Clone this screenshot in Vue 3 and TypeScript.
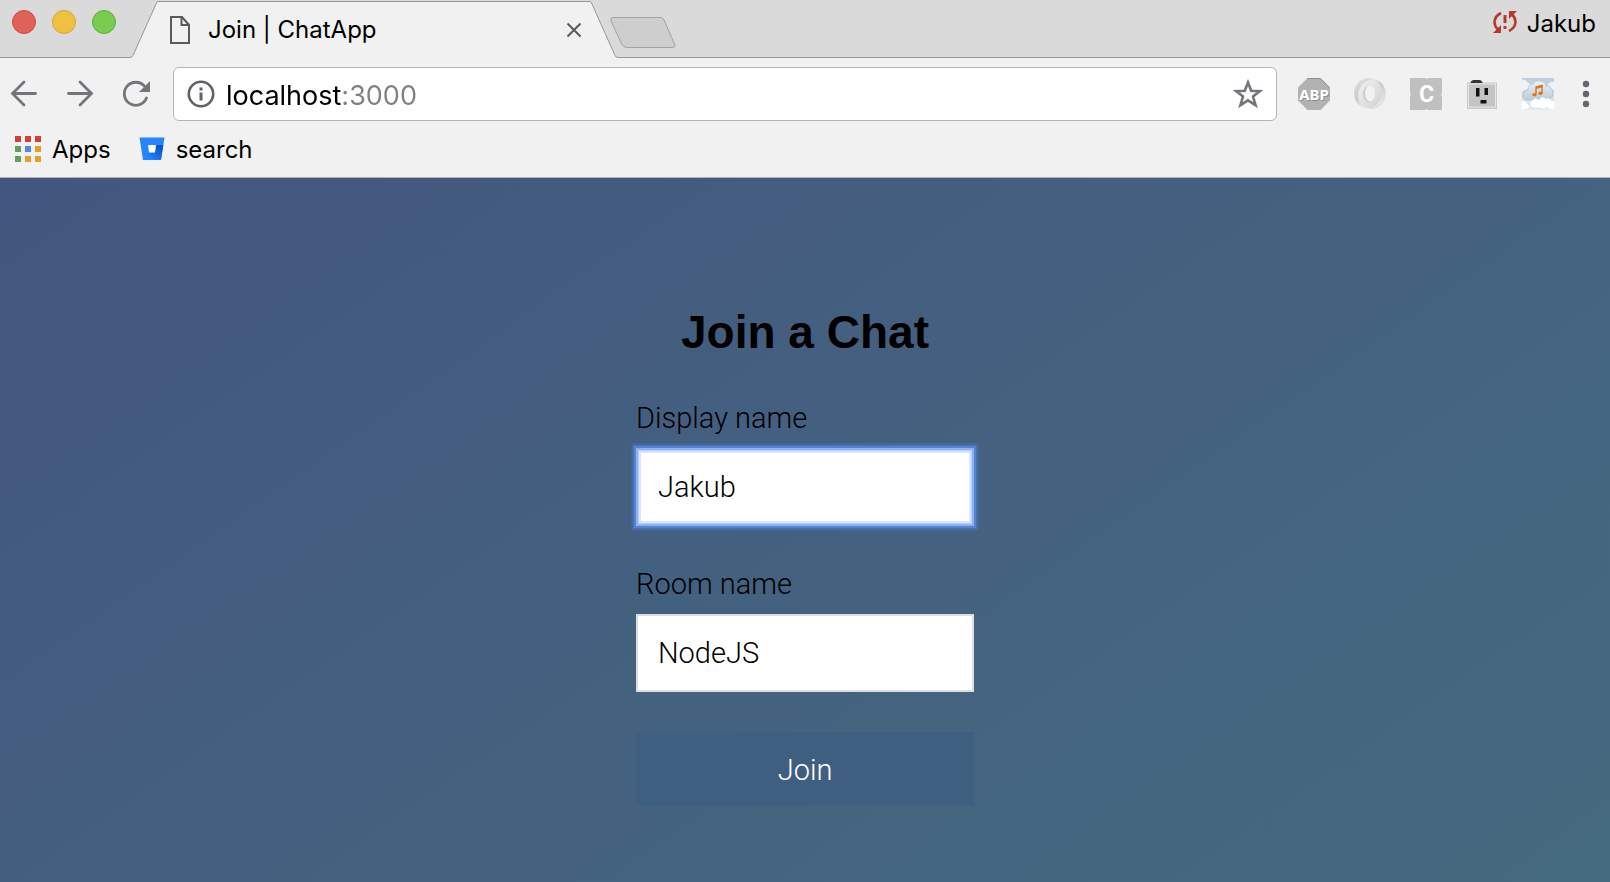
<script setup lang="ts">
import { ref } from 'vue'

const address = ref('localhost:3000')
const displayName = ref('Jakub')
const roomName = ref('NodeJS')

const appDots = [
  { x: 0, y: 0, color: '#d73c35' },
  { x: 10, y: 0, color: '#d73c35' },
  { x: 20, y: 0, color: '#d73c35' },
  { x: 0, y: 10, color: '#619f5d' },
  { x: 10, y: 10, color: '#4f87ee' },
  { x: 20, y: 10, color: '#dfa226' },
  { x: 0, y: 20, color: '#619f5d' },
  { x: 10, y: 20, color: '#dfa226' },
  { x: 20, y: 20, color: '#dfa226' },
]
</script>

<template>
  <div class="window">
    <header class="tab-strip">
      <div class="lights">
        <button class="light close" type="button" aria-label="Close window"></button>
        <button class="light minimise" type="button" aria-label="Minimise window"></button>
        <button class="light maximise" type="button" aria-label="Zoom window"></button>
      </div>
      <div class="tab">
        <svg class="slope" viewBox="0 0 28 58" aria-hidden="true">
          <path d="M0 58 V57.5 Q2 57.5 3 55.5 L26 4 Q27 1.5 28 1.5 V58 Z" fill="#f1f1f1" />
          <path d="M0 57.5 Q2 57.5 3 55.5 L26 4 Q27 1.5 28 1.5" fill="none" stroke="#989898" />
        </svg>
        <div class="tab-body">
          <svg class="page-icon" viewBox="0 0 20 28" aria-hidden="true">
            <path d="M1 1 H12 L19 9 V27 H1 Z M11.5 1 V9 H19" fill="none" stroke="#5a5a5a" stroke-width="2" />
          </svg>
          <span class="tab-title">Join | ChatApp</span>
          <button class="icon-button tab-close" type="button" aria-label="Close tab">
            <svg viewBox="0 0 16 16"><path d="M1.5 1.5 14.5 14.5 M14.5 1.5 1.5 14.5" stroke="#5a5a5a" stroke-width="2" /></svg>
          </button>
        </div>
        <svg class="slope" viewBox="0 0 28 58" aria-hidden="true">
          <path d="M28 58 V57.5 Q26 57.5 25 55.5 L2 4 Q1 1.5 0 1.5 V58 Z" fill="#f1f1f1" />
          <path d="M28 57.5 Q26 57.5 25 55.5 L2 4 Q1 1.5 0 1.5" fill="none" stroke="#989898" />
        </svg>
      </div>
      <button class="icon-button new-tab" type="button" aria-label="New tab">
        <svg viewBox="0 0 66 32">
          <path d="M3 .5 H50 Q53 .5 54 3 L64.500 27 Q66 30.500 62 30.500 H17 Q13.500 30.500 12 27.500 L1 4 Q0 .5 3 .5 Z" fill="#cecece" stroke="#a2a2a2" />
        </svg>
      </button>
      <button class="profile" type="button">
        <svg class="sync" viewBox="0 0 24 22" aria-hidden="true">
          <path d="M8 2 C0 6 0 14 5 18.500 M16 20 C24 16 24 8 19 3.500" fill="none" stroke="#b9382c" stroke-width="2.600" />
          <path d="M0 22 H8 V14 Z M16 0 H24 L16 8 Z" fill="#b9382c" />
          <path d="M10.500 4 H13.500 V12 H10.500 Z M10.500 15 H13.500 V18 H10.500 Z" fill="#b9382c" />
        </svg>
        <span>Jakub</span>
      </button>
    </header>

    <nav class="toolbar" aria-label="Browser controls">
      <div class="nav-buttons">
        <button class="icon-button" type="button" aria-label="Back">
          <svg viewBox="0 0 32 32"><path d="M27.500 15.500 H4.500 M16 4 L4.500 15.500 L16 27" fill="none" stroke="#72767b" stroke-width="2.800" stroke-linecap="round" stroke-linejoin="miter" /></svg>
        </button>
        <button class="icon-button" type="button" aria-label="Forward">
          <svg viewBox="0 0 32 32"><path d="M4.500 15.500 H27.500 M16 4 L27.500 15.500 L16 27" fill="none" stroke="#72767b" stroke-width="2.800" stroke-linecap="round" stroke-linejoin="miter" /></svg>
        </button>
        <button class="icon-button" type="button" aria-label="Reload">
          <svg viewBox="0 0 32 32">
            <path d="M26.500 20 A11.500 11.500 0 1 1 24.500 8.200" fill="none" stroke="#72767b" stroke-width="2.800" stroke-linecap="round" />
            <path d="M30 3 V14 H19 Z" fill="#72767b" />
          </svg>
        </button>
      </div>
      <div class="address">
        <svg class="info" viewBox="0 0 28 28" aria-hidden="true">
          <circle cx="14" cy="14" r="12.200" fill="none" stroke="#5f6368" stroke-width="2.600" />
          <path d="M12.500 7.500 H15.500 V10.500 H12.500 Z M12.500 12.500 H15.500 V20.500 H12.500 Z" fill="#5f6368" />
        </svg>
        <input v-model="address" class="address-input" type="text" aria-label="Address" />
        <button class="icon-button star" type="button" aria-label="Bookmark this page">
          <svg viewBox="0 0 30 30"><path d="M15 3.500 L18.200 11.800 L26.600 12.200 L20 17.500 L22.600 26.300 L15 21.300 L7.400 26.300 L10 17.500 L3.400 12.200 L11.800 11.800 Z" fill="none" stroke="#72767b" stroke-width="2.600" /></svg>
        </button>
      </div>
      <div class="extensions">
        <button class="icon-button" type="button" aria-label="Ad blocker">
          <svg viewBox="0 0 32 32">
            <path d="M9.500 0 H22.500 L32 9.500 V22.500 L22.500 32 H9.500 L0 22.500 V9.500 Z" fill="#b2b2b2" />
            <path d="M9.500 .5 H22.500 L31.500 9.500" fill="none" stroke="#8f8f8f" />
            <text class="abp" x="17" y="22.500" text-anchor="middle" fill="#8f8f8f">ABP</text>
            <text class="abp" x="16" y="21.500" text-anchor="middle" fill="#fff">ABP</text>
          </svg>
        </button>
        <button class="icon-button" type="button" aria-label="JSON viewer">
          <svg viewBox="0 0 32 32">
            <defs>
              <linearGradient id="ring-left" x1="0" y1="0" x2=".6" y2="1">
                <stop offset="0" stop-color="#e6e6e6" /><stop offset=".55" stop-color="#c9c9c9" /><stop offset="1" stop-color="#f4f4f4" />
              </linearGradient>
              <linearGradient id="ring-inner" x1="0" y1="0" x2="1" y2="1">
                <stop offset="0" stop-color="#f0f0f0" /><stop offset=".5" stop-color="#e2e2e2" /><stop offset="1" stop-color="#cfcfcf" />
              </linearGradient>
              <linearGradient id="ring-right" x1="0" y1="0" x2=".6" y2="1">
                <stop offset="0" stop-color="#f4f4f4" /><stop offset=".4" stop-color="#c6c6c6" /><stop offset="1" stop-color="#e8e8e8" />
              </linearGradient>
            </defs>
            <path d="M20 1 C8 -2 0 6 0 15 C0 25 7 31 16 31 C8 27 4 21 6 14 C8 7 13 3 20 1 Z" fill="url(#ring-left)" />
            <path d="M16 .5 C26 1 32 8 32 16 C32 25 25 32 15 31 C24 28 29 22 27 14 C26 7 22 3 16 .5 Z" fill="url(#ring-right)" />
            <path fill-rule="evenodd" d="M20 1 C28 5 30 15 26 22 C22 29 17 31 12 30 C4 26 2 16 6 10 C9 4 15 1 20 1 Z M16 7.500 C9.500 8 9.500 23 16 23.500 C22.500 23 22.500 8 16 7.500 Z" fill="url(#ring-inner)" />
            <path d="M16 7.500 C9.500 8 9.500 23 16 23.500 Q14 25 11 22 C7 17 9 8 16 7.500 Z" fill="#cccccc" />
          </svg>
        </button>
        <button class="icon-button" type="button" aria-label="Extension C">
          <svg viewBox="0 0 32 32">
            <rect width="32" height="32" rx="1" fill="#c0c0c0" />
            <text class="letter-c" x="16.500" y="24" text-anchor="middle" fill="#fff">C</text>
            <path d="M15 0 H18 L16.500 1 Z M15 32 H18 L16.500 31 Z M0 15 V18 L1 16.500 Z M32 15 V18 L31 16.500 Z" fill="#f1f1f1" />
          </svg>
        </button>
        <button class="icon-button" type="button" aria-label="Socket extension">
          <svg viewBox="0 0 32 32">
            <rect x="1" y="4.500" width="30" height="26.500" fill="#c9c9c9" />
            <rect x="2.500" y="6" width="27" height="23" fill="#c4c4c4" stroke="#e7e7e7" />
            <path d="M4.500 5 Q5 2 8 2 H13 Q16 2 16.500 5 Z" fill="#333" />
            <path d="M10 10 H13.500 V18.500 H10 Z M18.500 10 H22 V17 H18.500 Z M14.500 22 H20.500 V25.500 H14.500 Z" fill="#111" />
          </svg>
        </button>
        <button class="icon-button" type="button" aria-label="Cloud music">
          <svg viewBox="0 0 32 32">
            <defs>
              <linearGradient id="sky" x1="0" y1="0" x2="0" y2="1">
                <stop offset="0" stop-color="#bccedb" /><stop offset="1" stop-color="#e1edf6" />
              </linearGradient>
              <linearGradient id="cloud" x1="0" y1="0" x2="0" y2="1">
                <stop offset="0" stop-color="#edf2f6" /><stop offset="1" stop-color="#b9cbd9" />
              </linearGradient>
            </defs>
            <rect width="32" height="32" fill="url(#sky)" />
            <path d="M0 2 Q4 1 6 5 Q9 6 9 10 L0 13 Z M32 4 Q28 3 26 7 L27 12 H32 Z" fill="#edf3f7" />
            <path d="M5 22 Q0 21 1 16 Q2 12 6 12 Q6 6 11 6 Q13 2 18 3 Q23 3 24 8 Q30 8 31 14 Q31 20 26 22 Z" fill="url(#cloud)" stroke="#a9becd" stroke-width=".7" />
            <path d="M0 23 Q3 22 4 25 Q7 26 7 30 L0 32 Z M9 28 Q7 24 11 22 Q13 19 17 22 Q20 17 24 21 Q28 19 29 23 L32 23 V31 Q27 32 25 29 Q21 32 18 29 Q13 31 9 28 Z" fill="#fff" />
            <path d="M14 16.500 V9 L20 7.500 V15" fill="none" stroke="#e0761c" stroke-width="1.400" />
            <path d="M14 8.500 L20.500 7 V9.500 L14 11 Z" fill="#e0761c" />
            <ellipse cx="12.500" cy="16.800" rx="2.200" ry="1.700" fill="#e0761c" /><ellipse cx="18.500" cy="15.300" rx="2.200" ry="1.700" fill="#e0761c" />
          </svg>
        </button>
        <button class="icon-button menu" type="button" aria-label="Menu">
          <svg viewBox="0 0 16 32"><circle cx="8" cy="6" r="3.200" fill="#63666c" /><circle cx="8" cy="16" r="3.200" fill="#63666c" /><circle cx="8" cy="26" r="3.200" fill="#63666c" /></svg>
        </button>
      </div>
    </nav>

    <nav class="bookmarks" aria-label="Bookmarks">
      <a class="bookmark" href="#apps">
        <svg viewBox="0 0 26 26" aria-hidden="true">
          <rect v-for="dot in appDots" :key="`${dot.x}-${dot.y}`" :x="dot.x" :y="dot.y" width="6" height="6" :fill="dot.color" />
        </svg>
        <span>Apps</span>
      </a>
      <a class="bookmark" href="#search">
        <svg viewBox="0 0 26 26" aria-hidden="true">
          <defs>
            <linearGradient id="bucket" x1="1" y1=".3" x2=".4" y2="1">
              <stop offset="0" stop-color="#0a52cc" /><stop offset="1" stop-color="#2684ff" />
            </linearGradient>
          </defs>
          <path d="M.5 1.500 H25.500 L22 24 H4 Z" fill="#2684ff" />
          <path d="M17 9 H24.300 L22 24 H4.500 L10 16.500 H16 Z" fill="url(#bucket)" />
          <path d="M9 9 H17 L16 16.500 H10 Z" fill="#fff" />
        </svg>
        <span>search</span>
      </a>
    </nav>

    <main class="page">
      <form class="join-form" @submit.prevent>
        <h1>Join a Chat</h1>
        <div class="field">
          <label for="display-name">Display name</label>
          <input id="display-name" v-model="displayName" class="active" type="text" name="name" />
        </div>
        <div class="field">
          <label for="room-name">Room name</label>
          <input id="room-name" v-model="roomName" type="text" name="room" />
        </div>
        <button class="submit" type="submit">Join</button>
      </form>
    </main>
  </div>
</template>

<style>
body {
  margin: 0;
}
</style>

<style scoped>
* {
  box-sizing: border-box;
}

.window {
  display: flex;
  flex-direction: column;
  min-height: 100vh;
  background: #f1f1f1;
  color: #000;
  font: 24px/32px Inter, "Liberation Sans", sans-serif;
}

svg {
  display: block;
  flex: none;
}

button {
  border: 0;
  padding: 0;
  background: none;
  color: inherit;
  font: inherit;
}

.tab-strip {
  display: flex;
  height: 58px;
  background: #dadada;
  box-shadow: inset 0 -1px #989898;
}

.lights {
  display: flex;
  gap: 16px;
  padding: 10px 14px 0 12px;
}

.light {
  width: 24px;
  height: 24px;
  border: 1px solid;
  border-radius: 50%;
}

.close {
  background: #e0605a;
  border-color: #ce4a45;
}

.minimise {
  background: #f0c040;
  border-color: #d5a434;
}

.maximise {
  background: #78cc50;
  border-color: #5fae3c;
}

.tab {
  display: flex;
}

.slope {
  width: 28px;
  height: 58px;
}

.tab-body {
  display: flex;
  align-items: center;
  width: 432px;
  margin-top: 1px;
  padding: 0 8px 0 12px;
  border-top: 1px solid #989898;
  background: #f1f1f1;
}

.page-icon {
  width: 20px;
  height: 28px;
}

.tab-title {
  margin-left: 18px;
}

.icon-button svg {
  width: 32px;
  height: 32px;
}

.tab-close {
  margin-left: auto;
}

.tab-close svg {
  width: 16px;
  height: 16px;
}

.new-tab {
  align-self: flex-start;
  margin: 17px 0 0 -8px;
}

.new-tab svg {
  width: 66px;
}

.profile {
  display: flex;
  gap: 10px;
  margin: 8px 14px 0 auto;
  align-self: flex-start;
}

.sync {
  width: 24px;
  height: 22px;
  margin-top: 3px;
}

.toolbar {
  display: flex;
  align-items: center;
  padding: 9px 16px 0 8px;
}

.nav-buttons,
.extensions {
  display: flex;
  gap: 24px;
}

.address {
  display: flex;
  align-items: center;
  flex: 1;
  min-width: 0;
  height: 54px;
  margin: 0 21px;
  padding: 0 13px;
  border: 1px solid #b4b4b4;
  border-radius: 6px;
  background: #fff;
}

.info {
  width: 28px;
  height: 28px;
}

.address-input {
  flex: 1;
  min-width: 0;
  height: 40px;
  margin-left: 11px;
  padding: 2px 0 0;
  border: 0;
  outline: 0;
  background: linear-gradient(90deg, #000 117px, #808080 117px);
  -webkit-background-clip: text;
  background-clip: text;
  color: transparent;
  font: 27px/38px Inter, "Liberation Sans", sans-serif;
}

.star svg {
  width: 30px;
  height: 30px;
}

.menu svg {
  width: 16px;
}

.abp {
  font: bold 15px "Noto Sans", sans-serif;
}

.letter-c {
  font: bold 23px Roboto, sans-serif;
}

.bookmarks {
  display: flex;
  align-items: center;
  gap: 28px;
  height: 57px;
  padding: 0 15px;
  border-bottom: 1px solid #b2b2b6;
}

.bookmark {
  display: flex;
  align-items: center;
  gap: 11px;
  color: inherit;
  text-decoration: none;
}

.bookmark span {
  padding-top: 2px;
}

.bookmark svg {
  width: 26px;
  height: 26px;
}

.page {
  display: flex;
  flex: 1;
  align-items: center;
  justify-content: center;
  background: linear-gradient(145deg, #43567f, #456b80);
  font: 300 29px/36px Roboto, "Liberation Sans", sans-serif;
}

.join-form {
  display: flex;
  flex-direction: column;
  gap: 40px;
  width: 338px;
  padding-top: 48px;
}

h1 {
  margin: 0;
  padding-top: 2px;
  font: bold 46px/56px "Liberation Sans", Arial, sans-serif;
  text-align: center;
}

.field {
  display: flex;
  flex-direction: column;
  gap: 12px;
}

.field input {
  width: 100%;
  height: 78px;
  padding: 0 20px;
  border: 2px solid #dedede;
  border-radius: 0;
  outline: 0;
  background: #fff;
  color: #000;
  font: inherit;
}

.field .active {
  border-color: #8fb2f5;
  box-shadow:
    inset 0 0 0 1px #b8cdf9,
    inset 0 0 0 3px #d9e4fd,
    0 0 1px 2px #5583d3,
    0 0 2px 4px #4a70a9;
}

.submit {
  height: 74px;
  padding-top: 2px;
  background: #3f5f80;
  color: #fff;
}
</style>
